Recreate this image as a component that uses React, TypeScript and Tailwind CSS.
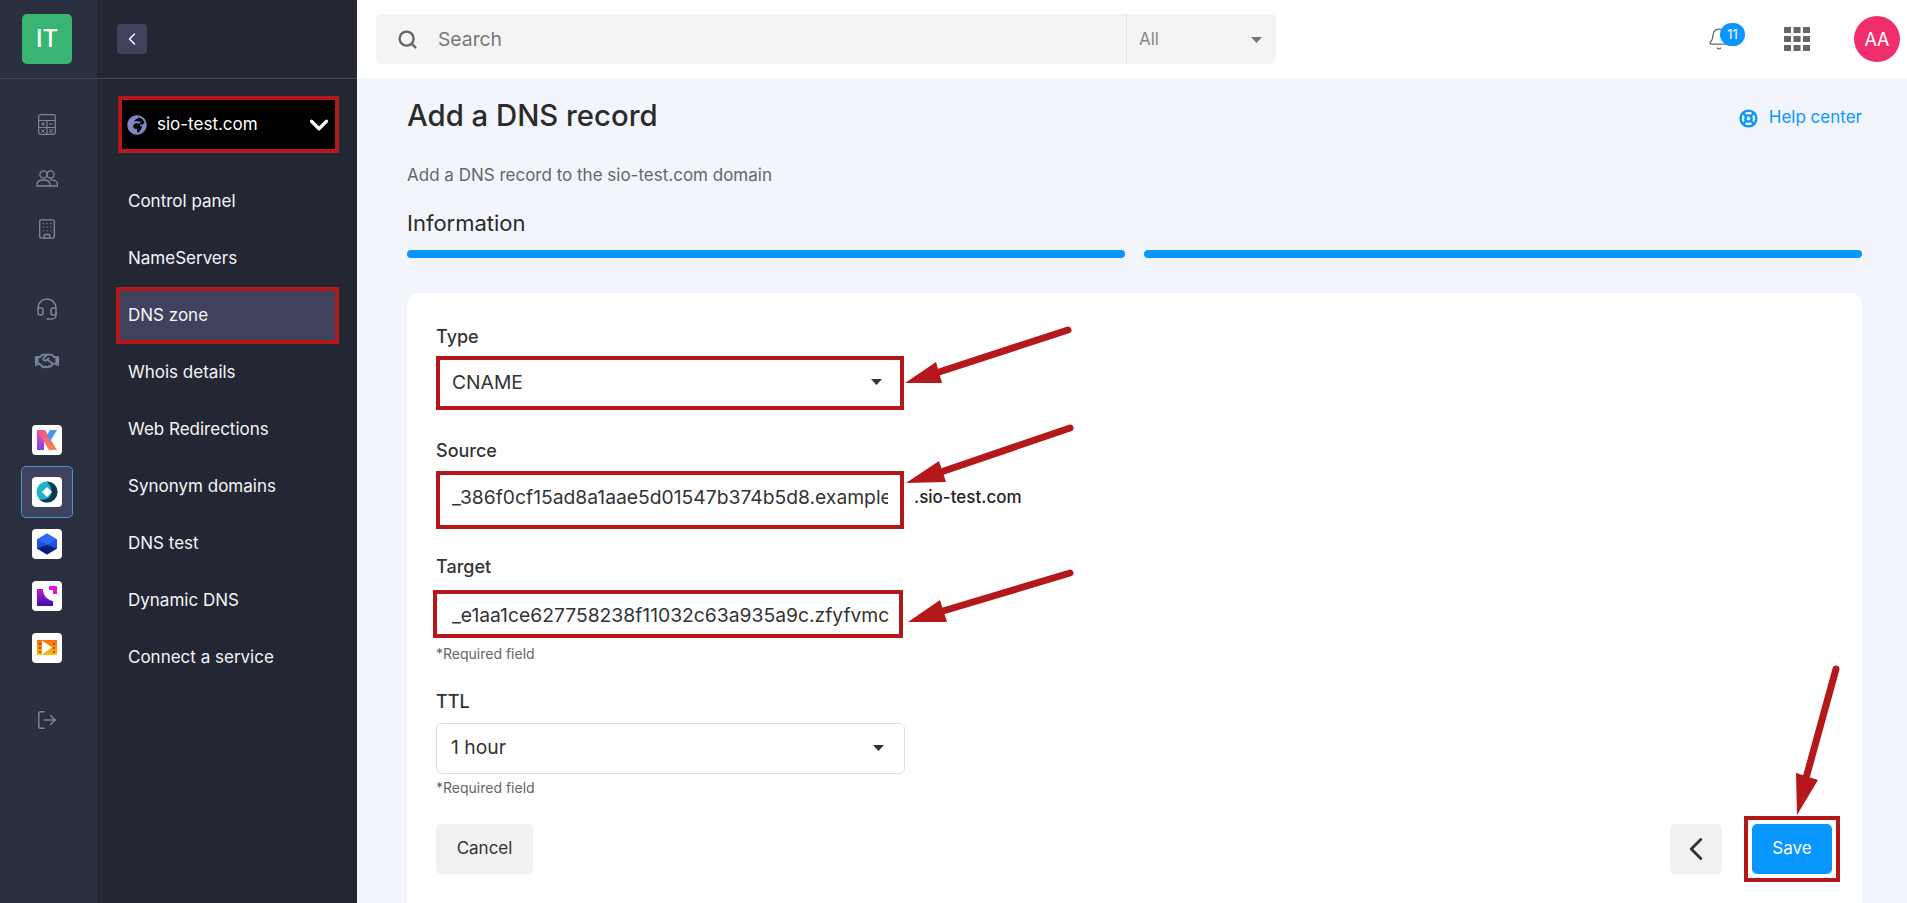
import { Bell, Building, ChevronDown, ChevronLeft, Headset, LifeBuoy, LogOut, Search } from 'lucide-react';
import { FaGlobeAfrica, FaRegHandshake } from 'react-icons/fa';
import type { ReactNode } from 'react';

const navItems = [
  'Control panel',
  'NameServers',
  'DNS zone',
  'Whois details',
  'Web Redirections',
  'Synonym domains',
  'DNS test',
  'Dynamic DNS',
  'Connect a service',
];

function Caret({ className }: { className: string }) {
  return (
    <svg viewBox="0 0 11 6" className={className} fill="currentColor">
      <path d="M0 0h11L5.5 6z" />
    </svg>
  );
}

function CalculatorIcon() {
  return (
    <svg viewBox="0 0 18 21" className="mt-[35px] h-[21px] w-[18px]" fill="none" stroke="currentColor" strokeWidth="1.2">
      <rect x="0.7" y="0.7" width="16.600" height="19.600" rx="2" />
      <path d="M1 6.500h16M1 13.500h16M9 6.500v14M14.500 3h.5" />
      <path d="M3 10h4M5 8v4M11 10h4M3.500 15.500l3 3M6.500 15.500l-3 3M11 16h4M11 18h4" strokeWidth="1" />
    </svg>
  );
}

function UsersIcon() {
  return (
    <svg viewBox="0 0 22 17" className="mt-[35px] h-[17px] w-[22px]" fill="none" stroke="currentColor" strokeWidth="1.3">
      <circle cx="7.500" cy="4.500" r="3.600" />
      <circle cx="14.500" cy="4.500" r="3.600" />
      <path d="M1 16v-1.500C1 11.500 3.500 10 7.500 10s6.500 1.500 6.500 4.500V16zM14 10c4.500-.5 7.500 1 7.500 4.500V16H14" />
    </svg>
  );
}

function KLogo() {
  return (
    <svg viewBox="0 0 30 30" className="h-[30px] w-[30px]">
      <defs>
        <linearGradient id="k-left" x1="0" y1="0" x2="0" y2="1">
          <stop offset="0" stopColor="#f04fb0" />
          <stop offset="1" stopColor="#7a45e8" />
        </linearGradient>
        <linearGradient id="k-leg" x1="0" y1="0" x2="1" y2="1">
          <stop offset="0" stopColor="#f0509a" />
          <stop offset="1" stopColor="#f78a4a" />
        </linearGradient>
      </defs>
      <path d="M5 5h7v20H5z" fill="url(#k-left)" />
      <path d="M5 5h8l12 20h-8z" fill="url(#k-leg)" />
      <path d="M15 10 18 5h7l-6.500 11z" fill="#3f9bf5" />
    </svg>
  );
}

function DiscLogo() {
  return (
    <svg viewBox="0 0 30 30" className="h-[30px] w-[30px]">
      <circle cx="15" cy="15" r="10.500" fill="#1fb4c6" />
      <path d="M15 4.500a10.500 10.500 0 0 1 0 21c-3 0-5.500-1-7.500-3 6 1 12-2 12-7.500 0-4-2-8-4.500-10.500z" fill="#0b3a4c" />
      <path d="M15 10 20 15l-5 5-5-5z" fill="#fff" />
    </svg>
  );
}

function CubeLogo() {
  return (
    <svg viewBox="0 0 30 30" className="h-[30px] w-[30px]">
      <path d="M15 4.500 25 10.500v9L15 25.500 5 19.500v-9z" fill="#1d4fe0" />
      <path d="M15 4.500 25 10.500 15 16 5 10.500z" fill="#2d6bf5" />
      <path d="M5 19.500 15 16l10 3.500-10 6z" fill="#0b1f7a" />
    </svg>
  );
}

function CornerLogo() {
  return (
    <svg viewBox="0 0 30 30" className="h-[30px] w-[30px]">
      <defs>
        <linearGradient id="corner" x1="0" y1="0" x2="0" y2="1">
          <stop offset="0" stopColor="#c41cc8" />
          <stop offset="1" stopColor="#3a0fb0" />
        </linearGradient>
      </defs>
      <path d="M5 8h6c0 6 4 11 10 12v5H5z" fill="url(#corner)" />
      <path d="M17 5h8v8h-4V9h-4z" fill="#e414d8" />
    </svg>
  );
}

function PlayLogo() {
  return (
    <svg viewBox="0 0 30 30" className="h-[30px] w-[30px]">
      <defs>
        <linearGradient id="play" x1="0" y1="0" x2="0" y2="1">
          <stop offset="0" stopColor="#f0700f" />
          <stop offset="1" stopColor="#f8c010" />
        </linearGradient>
      </defs>
      <rect x="5" y="7" width="20" height="15" fill="url(#play)" />
      <path d="M10 7.500 20 14.500 10 21.500z" fill="#fff" />
      <path d="M8 10v2M8 14v2M8 18v2M22 10v2M22 14v2M22 18v2" stroke="#c8200f" strokeWidth="1.500" />
    </svg>
  );
}

function AppTile({ children, active }: { children: ReactNode; active?: boolean }) {
  return (
    <div
      className={`flex h-[52px] w-[52px] items-center justify-center rounded-[5px] border ${
        active ? 'border-[#4a94cf] bg-[#40425d]' : 'border-transparent'
      }`}
    >
      <div className="h-[30px] w-[30px] overflow-hidden rounded-[4px] bg-white">{children}</div>
    </div>
  );
}

function FieldLabel({ children }: { children: ReactNode }) {
  return <div className="text-[18px] leading-[22px] font-medium text-[#333]">{children}</div>;
}

function Hint() {
  return <div className="text-[14px] leading-[16px] text-[#666]">*Required field</div>;
}

export default function App() {
  return (
    <div className="relative flex h-[903px] w-[1907px] overflow-hidden bg-[#f2f6fc] font-['Inter',sans-serif]">
      {/* icon rail */}
      <aside className="flex w-[97px] shrink-0 flex-col bg-[#2a3040] pr-[3px]">
        <div className="mr-[-3px] flex h-[79px] shrink-0 items-start justify-center border-b border-[#40425d] pt-[14px] pr-[3px]">
          <div className="flex h-[50px] w-[50px] items-center justify-center rounded-[5px] bg-[#38b473] text-[24px] font-medium text-white">
            IT
          </div>
        </div>
        <div className="flex flex-col items-center text-[#7a889e]">
          <CalculatorIcon />
          <UsersIcon />
          <Building className="mt-[31px] h-[22px] w-[22px]" strokeWidth={1.5} />
          <Headset className="mt-[57px] h-[24px] w-[24px]" strokeWidth={1.5} />
          <FaRegHandshake className="mt-[28px] h-[24px] w-[24px]" />
        </div>
        <div className="mt-[41px] flex flex-col items-center">
          <AppTile>
            <KLogo />
          </AppTile>
          <AppTile active>
            <DiscLogo />
          </AppTile>
          <AppTile>
            <CubeLogo />
          </AppTile>
          <AppTile>
            <CornerLogo />
          </AppTile>
          <AppTile>
            <PlayLogo />
          </AppTile>
        </div>
        <div className="mt-[35px] flex justify-center text-[#7a889e]">
          <LogOut className="h-[22px] w-[22px]" strokeWidth={1.5} />
        </div>
      </aside>

      {/* domain nav */}
      <nav className="flex w-[260px] shrink-0 flex-col bg-[#232733]">
        <div className="flex h-[79px] shrink-0 items-start border-b border-[#40425d] pt-[24px] pl-[20px]">
          <button className="flex h-[30px] w-[30px] items-center justify-center rounded-[4px] bg-[#40425d] text-white">
            <ChevronLeft className="h-[20px] w-[20px]" strokeWidth={1.75} />
          </button>
        </div>
        <div className="mt-[17px] ml-[21px] flex h-[57px] w-[221px] items-center border-[4px] border-[#b5181a] bg-black pr-[1px] pl-[5px] text-white">
          <FaGlobeAfrica className="h-[20px] w-[20px] text-[#7f86c9]" />
          <span className="ml-[10px] flex-1 text-[17px]">sio-test.com</span>
          <ChevronDown className="h-[30px] w-[30px]" strokeWidth={2.6} />
        </div>
        <ul className="mt-[20px] ml-[19px] w-[223px]">
          {navItems.map((item) => (
            <li
              key={item}
              className={`flex h-[57px] items-center text-[17px] text-[#f5f5f5] ${
                item === 'DNS zone' ? 'border-[4px] border-[#b5181a] bg-[#40425d] pl-[8px]' : 'pl-[12px]'
              }`}
            >
              {item}
            </li>
          ))}
        </ul>
      </nav>

      <div className="flex min-w-0 flex-1 flex-col">
        {/* top bar */}
        <header className="flex h-[78px] shrink-0 items-center bg-white pl-[19px]">
          <div className="flex h-[50px] w-[900px] items-center rounded-[5px] bg-[#f4f4f4]">
            <Search className="ml-[21px] h-[21px] w-[21px] text-[#666]" strokeWidth={2.75} />
            <span className="ml-[20px] flex-1 pt-[1px] text-[19.300px] text-[#777]">Search</span>
            <div className="flex h-full w-[150px] items-center justify-between border-l border-[#e4e4e4] pt-[1px] pr-[14px] pl-[12px] text-[17px] text-[#888]">
              All
              <Caret className="h-[6px] w-[11px] text-[#777]" />
            </div>
          </div>
          <div className="relative ml-[431px] h-[30px] w-[38px] text-[#666]">
            <Bell className="absolute top-[2px] left-0 h-[26px] w-[24px]" strokeWidth={1.25} />
            <span className="absolute top-[-1px] left-[13px] flex h-[23px] w-[25px] items-center justify-center rounded-full bg-[#0996ff] text-[13px] text-white">
              11
            </span>
          </div>
          <svg viewBox="0 0 26 24" className="ml-[39px] h-[24px] w-[26px] text-[#666]" fill="currentColor">
            <path d="M0 0h7v6H0zM9.500 0h7v6h-7zM19 0h7v6h-7zM0 9h7v6H0zM9.500 9h7v6h-7zM19 9h7v6h-7zM0 18h7v6H0zM9.500 18h7v6h-7z" />
            <path d="M19 18h7v6h-7z" />
          </svg>
          <div className="ml-[44px] flex h-[46px] w-[46px] items-center justify-center rounded-full bg-[#ee2f6c] text-[18px] text-white">
            AA
          </div>
        </header>

        <main className="flex min-h-0 flex-1 flex-col pr-[45px] pl-[50px]">
          <div className="mt-[18px] flex items-center justify-between">
            <h1 className="text-[29.300px] leading-[40px] font-medium text-[#2b2b2b]">Add a DNS record</h1>
            <div className="flex items-center pt-[4px] text-[17px] text-[#0996ff]">
              <LifeBuoy className="mr-[11px] h-[19px] w-[19px]" strokeWidth={3} />
              Help center
            </div>
          </div>
          <p className="mt-[29px] text-[17px] leading-[20px] text-[#666]">Add a DNS record to the sio-test.com domain</p>
          <h2 className="mt-[23px] text-[22px] leading-[30px] text-[#2b2b2b]">Information</h2>
          <div className="mt-[12px] flex gap-[19px]">
            <div className="h-[8px] flex-1 rounded-full bg-[#0996ff]" />
            <div className="h-[8px] flex-1 rounded-full bg-[#0996ff]" />
          </div>

          <section className="mt-[35px] flex flex-1 flex-col rounded-t-[12px] bg-white pl-[29px]">
            <div className="mt-[33px]">
              <FieldLabel>Type</FieldLabel>
            </div>
            <div className="mt-[8px] flex h-[54px] w-[468px] items-center justify-between border-[4px] border-[#b5181a] pr-[18px] pb-[2px] pl-[12px] text-[19.300px] text-[#333]">
              CNAME
              <Caret className="h-[6px] w-[11px] text-[#333]" />
            </div>
            <div className="mt-[30px]">
              <FieldLabel>Source</FieldLabel>
            </div>
            <div className="mt-[9px] flex items-center">
              <input
                readOnly
                value="_386f0cf15ad8a1aae5d01547b374b5d8.example.com"
                className="h-[58px] w-[468px] border-[4px] border-[#b5181a] pr-[12px] pb-[6px] pl-[12px] text-[19.300px] text-[#333] outline-none"
              />
              <span className="ml-[10px] pb-[4px] text-[17px] font-medium text-[#222]">.sio-test.com</span>
            </div>
            <div className="mt-[27px]">
              <FieldLabel>Target</FieldLabel>
            </div>
            <input
              readOnly
              value="_e1aa1ce627758238f11032c63a935a9c.zfyfvmc"
              className="mt-[12px] ml-[-3px] h-[48px] w-[470px] border-[4px] border-[#b5181a] pt-[1px] pr-[10px] pl-[15px] text-[19.300px] text-[#333] outline-none"
            />
            <div className="mt-[8px]">
              <Hint />
            </div>
            <div className="mt-[29px]">
              <FieldLabel>TTL</FieldLabel>
            </div>
            <div className="mt-[10px] flex h-[51px] w-[469px] items-center justify-between rounded-[6px] border border-[#dedede] pr-[20px] pb-[2px] pl-[14px] text-[19.300px] text-[#333]">
              1 hour
              <Caret className="h-[6px] w-[11px] text-[#333]" />
            </div>
            <div className="mt-[6px]">
              <Hint />
            </div>
            <div className="mt-[20px] flex items-center pr-[22px]">
              <button className="h-[50px] w-[97px] rounded-[5px] bg-[#f1f1f1] text-[17px] text-[#333]">Cancel</button>
              <button className="ml-auto flex h-[50px] w-[52px] items-center justify-center rounded-[5px] bg-[#f1f1f1] text-[#333]">
                <ChevronLeft className="h-[38px] w-[38px]" strokeWidth={1.8} />
              </button>
              <div className="ml-[22px] border-[4px] border-[#b5181a] p-[4px]">
                <button className="block h-[50px] w-[80px] rounded-[5px] bg-[#0996ff] text-[17px] text-white">Save</button>
              </div>
            </div>
          </section>
        </main>
      </div>

      {/* red annotation arrows drawn over the page */}
      <svg viewBox="0 0 1907 903" className="pointer-events-none absolute inset-0 h-[903px] w-[1907px]">
        <g stroke="#b5181a" strokeWidth="7" strokeLinecap="round" fill="#b5181a">
          <path d="M1068 330 936 373" />
          <path d="M1070 428 941 472" />
          <path d="M1070 573 943 611" />
          <path d="M1836 669 1806 778" />
        </g>
        <g fill="#b5181a">
          <path d="M905 383 936 362 942 383z" />
          <path d="M906 483 939 461 946 482z" />
          <path d="M908 622 940 600 947 622z" />
          <path d="M1797 815 1796 773 1818 780z" />
        </g>
      </svg>
    </div>
  );
}
